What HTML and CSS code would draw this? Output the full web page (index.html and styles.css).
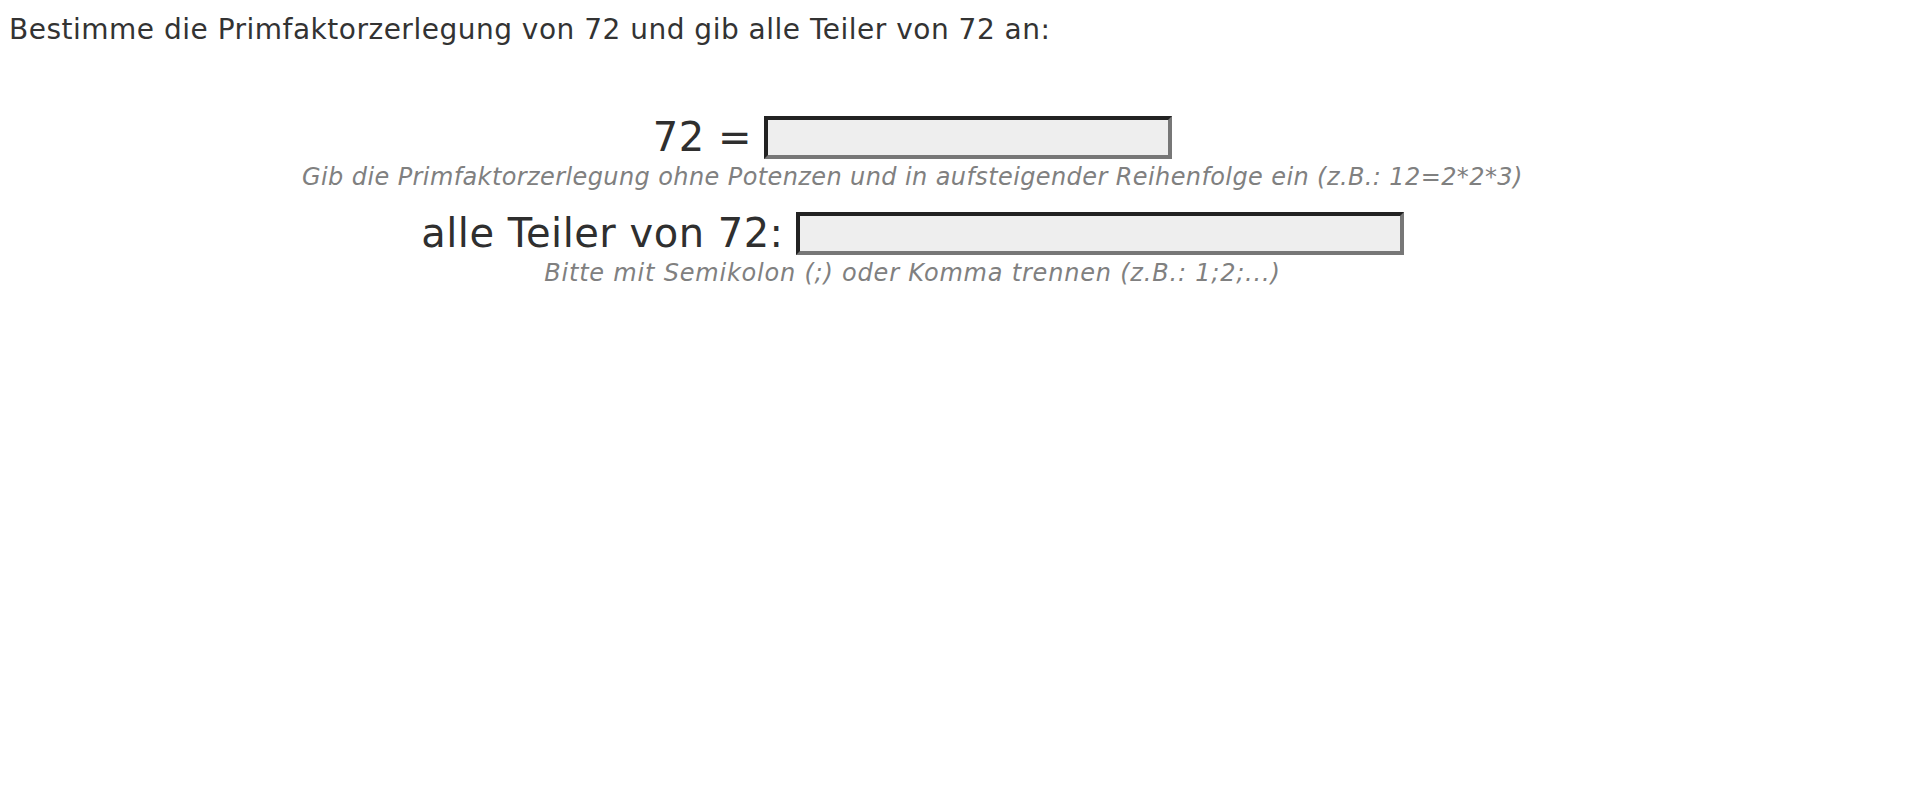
FILE: index.html
```html
<!DOCTYPE html>
<html lang="de">
<head>
    <meta charset="UTF-8">
    <meta name="viewport" content="width=device-width, initial-scale=1.0">
    <title>Primfaktorzerlegung</title>
    <link rel="stylesheet" href="styles.css">
</head>
<body>
    <p class="task">Bestimme die Primfaktorzerlegung von 72 und gib alle Teiler von 72 an:</p>

    <div class="exercise">
        <div class="row">
            <span class="label">72 =</span>
            <input type="text" class="answer short" id="primfaktoren">
        </div>
        <p class="hint">Gib die Primfaktorzerlegung ohne Potenzen und in aufsteigender Reihenfolge ein (z.B.: 12=2*2*3)</p>

        <div class="row row-second">
            <span class="label">alle Teiler von 72:</span>
            <input type="text" class="answer long" id="teiler">
        </div>
        <p class="hint hint-list">Bitte mit Semikolon (;) oder Komma trennen (z.B.: 1;2;...)</p>
    </div>
</body>
</html>
```

FILE: styles.css
```css
/* Grundlayout der Aufgabe */
body {
    font-family: 'DejaVu Sans', Verdana, sans-serif;
    color: #333333;
    background-color: #ffffff;
    margin: 8px;
}

.task {
    font-size: 28px;
    line-height: 32px;
    letter-spacing: 0.5px;
    margin: 6px 0 0 1px;
}

.exercise {
    width: 95%;
    text-align: center;
}

.row {
    display: flex;
    justify-content: center;
    align-items: center;
    gap: 12px;
    margin-top: 70px;
}

.row-second {
    margin-top: 20px;
}

.label {
    font-size: 40px;
    line-height: 40px;
    letter-spacing: 0.5px;
    padding-bottom: 2px;
    color: #2f2f2f;
}

.answer {
    box-sizing: border-box;
    height: 43px;
    margin: 0;
    padding: 0 6px;
    background-color: #eeeeee;
    border-style: solid;
    border-width: 4px;
    border-color: #222222 #777777 #777777 #222222;
    font-family: inherit;
    font-size: 24px;
    color: #333333;
}

.short {
    width: 408px;
}

.long {
    width: 608px;
}

/* Hinweise unter den Eingabefeldern */
.hint {
    font-size: 24px;
    line-height: 29px;
    font-style: italic;
    letter-spacing: 0.4px;
    color: #808080;
    margin: 4px 0 0 0;
}

.hint-list {
    letter-spacing: 0.8px;
}
```
